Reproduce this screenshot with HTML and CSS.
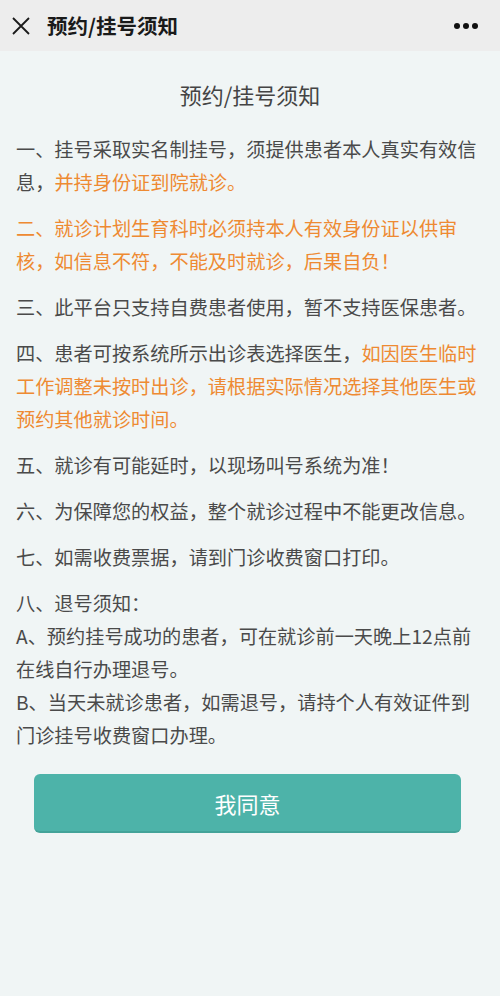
FILE: index.html
```html
<!DOCTYPE html>
<html lang="zh-CN">
<head>
    <meta charset="UTF-8">
    <meta name="viewport" content="width=device-width, initial-scale=1.0">
    <title>预约/挂号须知</title>
    <link rel="stylesheet" href="styles.css">
</head>
<body>
    <div class="top-bar">
        <div class="top-left">
            <svg class="close-icon" width="18" height="18" viewBox="0 0 18 18">
                <path d="M1 1 L17 17 M17 1 L1 17" stroke="#1a1a1a" stroke-width="1.8" fill="none"/>
            </svg>
            <div class="top-title">预约/挂号须知</div>
        </div>
        <div class="more">
            <span></span><span></span><span></span>
        </div>
    </div>

    <div class="content">
        <h1 class="notice-title">预约/挂号须知</h1>

        <p>一、挂号采取实名制挂号，须提供患者本人真实有效信息，<span class="warn">并持身份证到院就诊。</span></p>
        <p class="warn">二、就诊计划生育科时必须持本人有效身份证以供审核，如信息不符，不能及时就诊，后果自负！</p>
        <p>三、此平台只支持自费患者使用，暂不支持医保患者。</p>
        <p>四、患者可按系统所示出诊表选择医生，<span class="warn">如因医生临时工作调整未按时出诊，请根据实际情况选择其他医生或预约其他就诊时间。</span></p>
        <p>五、就诊有可能延时，以现场叫号系统为准！</p>
        <p>六、为保障您的权益，整个就诊过程中不能更改信息。</p>
        <p>七、如需收费票据，请到门诊收费窗口打印。</p>
        <p>八、退号须知：<br>A、预约挂号成功的患者，可在就诊前一天晚上12点前在线自行办理退号。<br>B、当天未就诊患者，如需退号，请持个人有效证件到门诊挂号收费窗口办理。</p>

        <button class="agree-btn">我同意</button>
    </div>
</body>
</html>
```

FILE: styles.css
```css
html, body {
    margin: 0;
    padding: 0;
}

body {
    font-family: "Noto Sans CJK SC", "Noto Sans", sans-serif;
    background-color: #f0f5f5;
    width: 500px;
    min-height: 996px;
}

.top-bar {
    height: 51px;
    background-color: #ededed;
    display: flex;
    justify-content: space-between;
    align-items: center;
    padding: 0 22px 0 12px;
}

.top-left {
    display: flex;
    align-items: center;
    gap: 17px;
}

.close-icon {
    display: block;
}

.top-title {
    font-size: 20.5px;
    font-weight: bold;
    color: #1a1a1a;
    line-height: 1;
    margin-top: -1px;
}

.more {
    display: flex;
    gap: 3px;
}

.more span {
    width: 6px;
    height: 6px;
    border-radius: 50%;
    background-color: #111;
}

.content {
    padding: 28px 16px 0 16px;
}

.notice-title {
    margin: 0 0 24px 0;
    font-size: 22px;
    font-weight: normal;
    line-height: 30px;
    color: #444;
    text-align: center;
}

.content p {
    margin: 0 0 13px 0;
    font-size: 19.2px;
    line-height: 33px;
    color: #4a4a4a;
}

.warn {
    color: #ee8a32;
}

.content p.warn {
    color: #ee8a32;
}

.agree-btn {
    display: block;
    margin: 22px 0 0 18px;
    width: 427px;
    height: 59px;
    border: none;
    border-bottom: 2px solid #43a399;
    border-radius: 6px;
    background-color: #4db3a9;
    color: #fff;
    font-family: "Noto Sans CJK SC", "Noto Sans", sans-serif;
    font-size: 22px;
}
```
